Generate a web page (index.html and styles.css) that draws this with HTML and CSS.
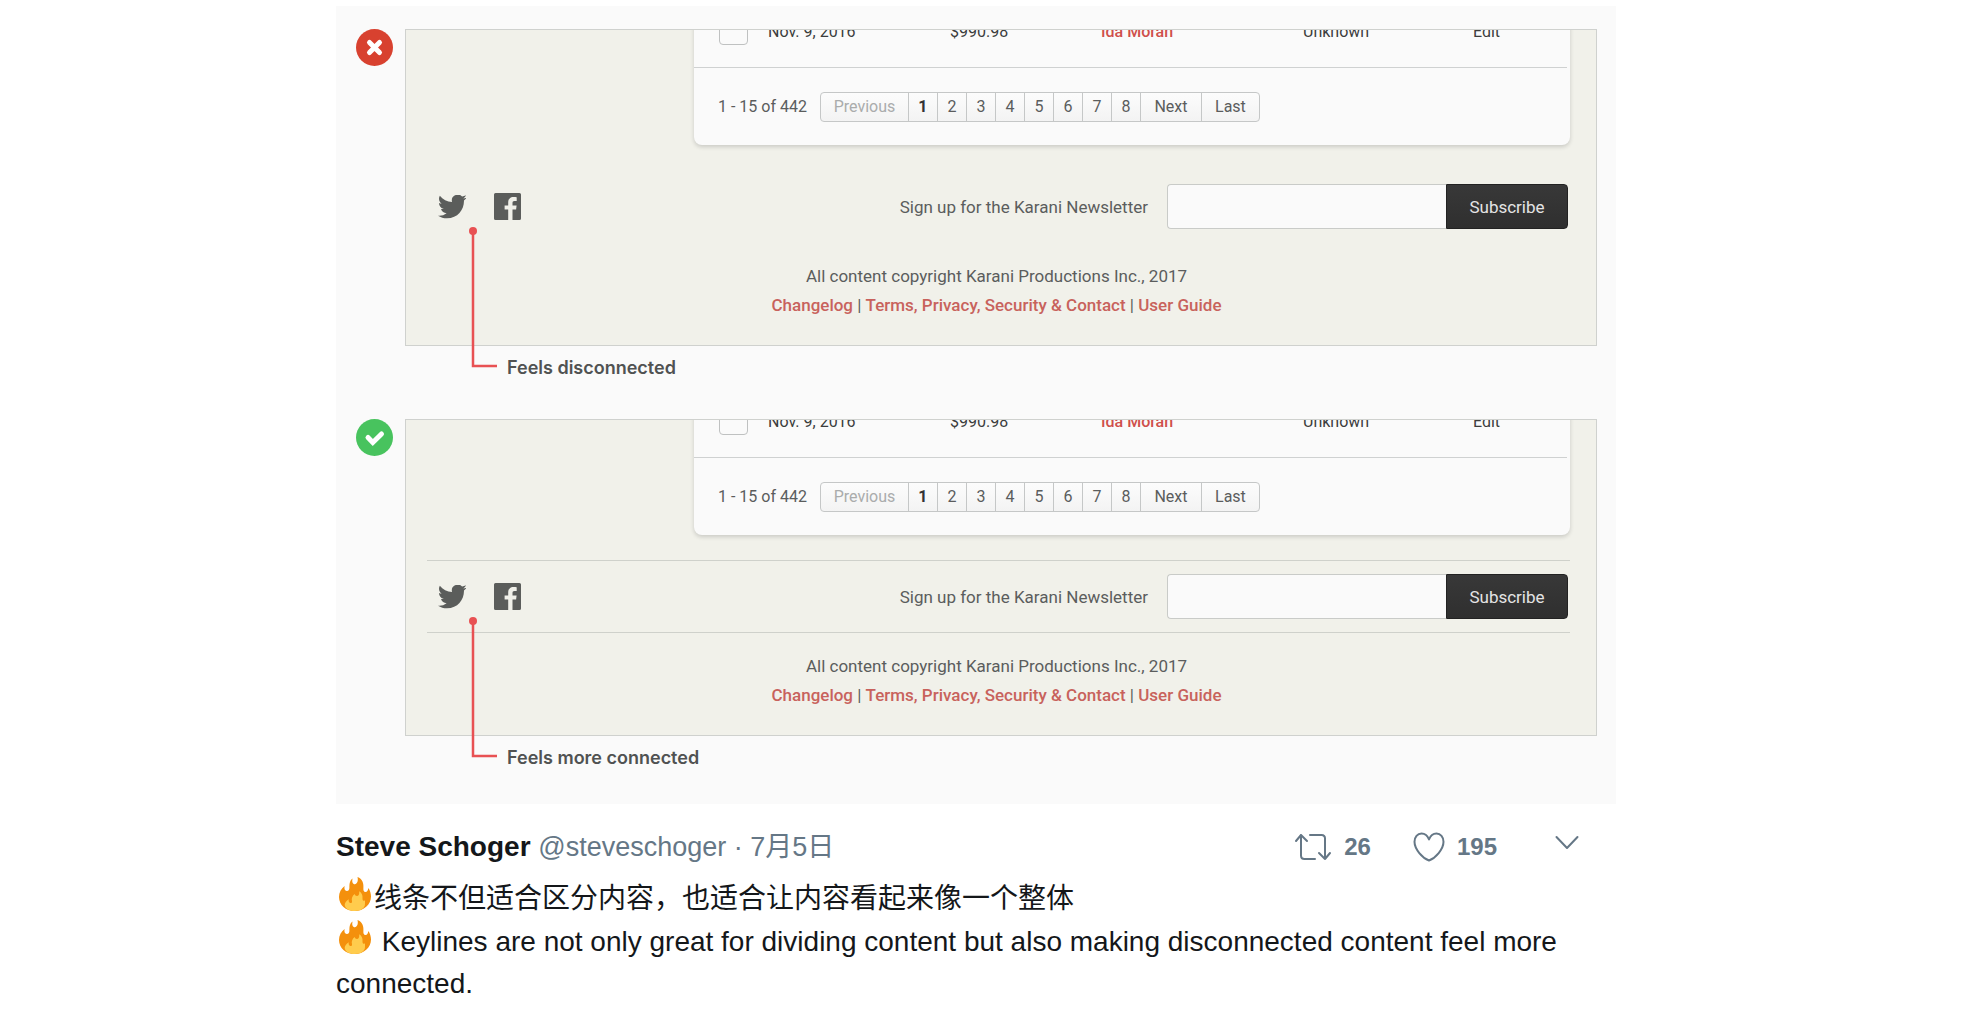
FILE: index.html
```html
<!DOCTYPE html>
<html lang="zh-CN">
<head>
<meta charset="utf-8">
<meta name="viewport" content="width=device-width, initial-scale=1">
<title>Steve Schoger: Keylines</title>
<link rel="stylesheet" href="styles.css">
</head>
<body>
<svg class="sprite" aria-hidden="true">
  <symbol id="twitter" viewBox="1 1 26 22">
    <path d="M27.6 3.1c-1 .4-2 .7-3.100.9 1.100-.7 2-1.800 2.400-3-1.100.6-2.200 1.100-3.500 1.300A5.500 5.500 0 0 0 14 7.300C9.500 7.100 5.400 4.900 2.700 1.500c-1.500 2.500-.7 5.800 1.700 7.400-.9 0-1.700-.3-2.500-.7 0 2.700 1.900 5 4.400 5.500-.8.200-1.600.3-2.500.1.700 2.200 2.700 3.800 5.200 3.900A11.200 11.200 0 0 1 .8 20c2.500 1.600 5.400 2.500 8.500 2.500 10.300 0 16.100-8.700 15.800-16.500 1-.8 1.900-1.800 2.500-2.900z"/>
  </symbol>
  <symbol id="facebook" viewBox="0 0 27 27">
    <path d="M1.500 0h24A1.500 1.500 0 0 1 27 1.500v24a1.500 1.500 0 0 1-1.500 1.500h-7V16.600h3.600l.5-4.100h-4.100V9.900c0-1.200.3-2 2-2h2.200V4.200c-.4 0-1.700-.2-3.200-.2-3.100 0-5.300 1.900-5.300 5.500v3h-3.600v4.100h3.600V27H1.500A1.500 1.500 0 0 1 0 25.500v-24A1.500 1.500 0 0 1 1.500 0z"/>
  </symbol>
  <symbol id="callout" viewBox="0 0 28 142">
    <circle cx="4" cy="4" r="4" fill="#e85153"/>
    <path d="M4 4v135h24" fill="none" stroke="#e85153" stroke-width="2.500"/>
  </symbol>
  <symbol id="fire" viewBox="0 0 32 34">
    <path fill="#f4900c" d="M32 19.500c0-3.300-1-6.400-2.700-8.600-.3 2.700-1.300 4.100-2.700 4.100-2 0-2.400-1.800-2.200-4.500.3-4.300-1.100-8.600-5.900-10.400 1 3.800-.4 7-2.600 7.100-2.300 0-3.200-2.700-2.300-5.800C9.800 4.200 10.600 8.600 10.400 11c-.1 2-1.200 3.100-2.700 2.900-1.900-.3-2.700-2.100-2.100-4.900C2.100 11.600 0 15.600 0 20c0 7.900 6.700 14 15.700 14S32 27.700 32 19.500z"/>
    <path fill="#ffcc4d" d="M26 23.500c-1.300.5-2.700-.1-2.500-2.100.3-3.200-.7-5.600-3.400-7.100.5 2.500-.3 4.400-1.800 4.600-1.500.2-2.300-.9-2.600-2-2.600 2-3.400 4.600-2.700 7.400.2 1.300-.5 2-1.700 1.700-1.300-.3-2-1.600-1.500-3.700-2.500 1.500-4.200 4-4.100 5.700C6.100 31.800 10.200 34 15.800 34c5.900 0 10.200-2.600 10.200-7.200 0-1.100 0-2.200 0-3.300z"/>
  </symbol>
</svg>
<article class="tweet">
  <div class="media">
    <section class="example">
      <svg class="badge" viewBox="0 0 37 37" role="img" aria-label="Wrong"><circle cx="18.500" cy="18.500" r="18.500" fill="#d8412f"/><path d="M13.500 13.500l10 10m0-10l-10 10" stroke="#fff" stroke-width="5" stroke-linecap="round"/></svg>
      <div class="panel">
        <div class="card">
          <table class="rows">
            <colgroup><col class="col-check"><col class="col-date"><col class="col-amount"><col class="col-name"><col class="col-status"><col></colgroup>
            <tr><td><input class="check" type="checkbox" aria-label="Select row"></td><td>Nov. 9, 2016</td><td>$990.98</td><td><a class="person" href="#">Ida Moran</a></td><td>Unknown</td><td><a class="edit" href="#">Edit</a></td></tr>
          </table>
          <div class="paging">
            <span>1 - 15 of 442</span>
            <nav class="pager" aria-label="Pages"><button class="page prev" type="button" disabled>Previous</button><button class="page current" type="button">1</button><button class="page" type="button">2</button><button class="page" type="button">3</button><button class="page" type="button">4</button><button class="page" type="button">5</button><button class="page" type="button">6</button><button class="page" type="button">7</button><button class="page" type="button">8</button><button class="page next" type="button">Next</button><button class="page last" type="button">Last</button></nav>
          </div>
        </div>
        <div class="bar">
          <div class="social"><a href="#" aria-label="Twitter"><svg class="twitter"><use href="#twitter"/></svg></a><a href="#" aria-label="Facebook"><svg class="facebook"><use href="#facebook"/></svg></a></div>
          <form class="signup"><label for="mail-1">Sign up for the Karani Newsletter</label><div class="field"><input class="mail" id="mail-1" type="email"><button class="subscribe" type="button">Subscribe</button></div></form>
        </div>
        <footer class="legal"><p>All content copyright Karani Productions Inc., 2017</p><p><a href="#">Changelog</a> | <a href="#">Terms, Privacy, Security &amp; Contact</a> | <a href="#">User Guide</a></p></footer>
      </div>
      <p class="caption"><svg class="callout" aria-hidden="true"><use href="#callout"/></svg>Feels disconnected</p>
    </section>
    <section class="example">
      <svg class="badge" viewBox="0 0 37 37" role="img" aria-label="Right"><circle cx="18.500" cy="18.500" r="18.500" fill="#48c35e"/><path d="M12 18.500l4.800 5 8.700-8.500" fill="none" stroke="#fff" stroke-width="5" stroke-linecap="round"/></svg>
      <div class="panel">
        <div class="card">
          <table class="rows">
            <colgroup><col class="col-check"><col class="col-date"><col class="col-amount"><col class="col-name"><col class="col-status"><col></colgroup>
            <tr><td><input class="check" type="checkbox" aria-label="Select row"></td><td>Nov. 9, 2016</td><td>$990.98</td><td><a class="person" href="#">Ida Moran</a></td><td>Unknown</td><td><a class="edit" href="#">Edit</a></td></tr>
          </table>
          <div class="paging">
            <span>1 - 15 of 442</span>
            <nav class="pager" aria-label="Pages"><button class="page prev" type="button" disabled>Previous</button><button class="page current" type="button">1</button><button class="page" type="button">2</button><button class="page" type="button">3</button><button class="page" type="button">4</button><button class="page" type="button">5</button><button class="page" type="button">6</button><button class="page" type="button">7</button><button class="page" type="button">8</button><button class="page next" type="button">Next</button><button class="page last" type="button">Last</button></nav>
          </div>
        </div>
        <div class="bar keylines">
          <div class="social"><a href="#" aria-label="Twitter"><svg class="twitter"><use href="#twitter"/></svg></a><a href="#" aria-label="Facebook"><svg class="facebook"><use href="#facebook"/></svg></a></div>
          <form class="signup"><label for="mail-2">Sign up for the Karani Newsletter</label><div class="field"><input class="mail" id="mail-2" type="email"><button class="subscribe" type="button">Subscribe</button></div></form>
        </div>
        <footer class="legal"><p>All content copyright Karani Productions Inc., 2017</p><p><a href="#">Changelog</a> | <a href="#">Terms, Privacy, Security &amp; Contact</a> | <a href="#">User Guide</a></p></footer>
      </div>
      <p class="caption"><svg class="callout" aria-hidden="true"><use href="#callout"/></svg>Feels more connected</p>
    </section>
  </div>
  <header class="meta">
    <div class="author"><strong>Steve Schoger</strong> <span class="handle">@steveschoger · 7月5日</span></div>
    <div class="actions">
      <button class="action" type="button" aria-label="Retweet, 26"><svg width="38" height="28" viewBox="0 0 38 28"><path d="M2 8l5-6 6 6M7 2v20.500q0 3.500 3.500 3.500H21M16 2h11.500q3.500 0 3.500 3.500V26M25 20l6 6 5-6"/></svg><span>26</span></button>
      <button class="action" type="button" aria-label="Like, 195"><svg width="32" height="30" viewBox="0 0 32 30"><path d="M16 7.500C14.500 3.500 11.500 1.500 8.500 1.500 4.500 1.500 1.500 5 1.500 9.800c0 7.500 8 16.200 14.500 18.700 6.500-2.500 14.500-11.200 14.500-18.700 0-4.800-3-8.300-7-8.300-3 0-6 2-7.500 6z"/></svg><span>195</span></button>
      <button class="action more" type="button" aria-label="More"><svg width="24" height="16" viewBox="0 0 24 16"><path d="M1.500 2L12 13 22.500 2"/></svg></button>
    </div>
  </header>
  <div class="text">
    <p><svg class="fire" role="img" aria-label="Fire"><use href="#fire"/></svg>线条不但适合区分内容，也适合让内容看起来像一个整体</p>
    <p><svg class="fire" role="img" aria-label="Fire"><use href="#fire"/></svg> Keylines are not only great for dividing content but also making disconnected content feel more connected.</p>
  </div>
</article>
</body>
</html>
```
FILE: styles.css
```css
* { box-sizing: border-box; }
body {
  margin: 0;
  padding: 6px 30px 0 0;
  background: #fff;
  font-family: "Liberation Sans", "Noto Sans CJK SC", sans-serif;
}
p { margin: 0; }
a { color: inherit; text-decoration: none; }
button, input { font: inherit; color: inherit; margin: 0; }
svg { display: block; flex: none; }
.sprite { position: absolute; width: 0; height: 0; }

.tweet { max-width: 1280px; margin: 0 auto; }

/* Attached illustration */
.media {
  display: grid;
  gap: 37px;
  padding: 23px 19px 32px 20px;
  background: #fafafa;
  font: 16px/20px Roboto, sans-serif;
  color: #5b5d5d;
}
.example { display: grid; grid-template-columns: 37px 1fr; column-gap: 12px; }
.badge { width: 37px; height: 37px; }
.panel {
  overflow: hidden;
  padding: 0 26px 25px 21px;
  border: 1px solid #cfd1ce;
  background: #f1f1ea;
}
.card {
  margin: -33px 0 25px 267px;
  border-radius: 8px;
  background: #fafafa;
  box-shadow: 0 2px 4px rgba(0, 0, 0, .16);
}
.rows { width: 100%; padding-right: 3px; border-spacing: 0; table-layout: fixed; color: #3c3d3d; }
.rows td { height: 71px; padding: 0; border-bottom: 1px solid #cfd1d1; }
.col-check { width: 74px; }
.col-date { width: 182px; }
.col-amount { width: 151px; }
.col-name { width: 202px; }
.col-status { width: 170px; }
.check {
  appearance: none;
  display: block;
  width: 29px;
  height: 26px;
  margin-left: 25px;
  border: 1px solid #bfc1c1;
  border-radius: 4px;
}
.person { color: #cf4f4b; font-weight: 500; }
.paging { display: flex; align-items: center; gap: 13px; height: 77px; padding-left: 24px; }
.pager { display: flex; border: 1px solid #c5c7c7; border-radius: 4px; background: linear-gradient(#fcfcfc, #f3f3f3); }
.page { width: 29px; height: 28px; padding: 0; border: 0; border-left: 1px solid #c5c7c7; background: none; }
.prev { width: 87px; border-left: 0; color: #aaacac; }
.current { color: #333; font-weight: 700; }
.next { width: 61px; }
.last { width: 58px; }

.bar {
  display: flex;
  align-items: center;
  justify-content: space-between;
  height: 73px;
  padding: 0 2px 0 11px;
  border: solid transparent;
  border-width: 1px 0;
}
.keylines { border-color: #cfd1cb; }
.social { display: flex; align-items: center; gap: 28px; fill: #5b5d5b; }
.twitter { width: 28px; height: 24px; }
.facebook { width: 27px; height: 27px; }
.signup { display: flex; align-items: center; gap: 19px; font-size: 17px; }
.field { display: flex; }
.mail {
  width: 279px;
  height: 45px;
  padding: 0 12px;
  border: 1px solid #c9cbc8;
  border-right: 0;
  border-radius: 4px 0 0 4px;
  background: #fafafa;
}
.subscribe {
  width: 122px;
  height: 45px;
  border: 1px solid #222;
  border-radius: 0 4px 4px 0;
  background: linear-gradient(#383838, #2f2f2f);
  color: #e4e4e4;
}
.legal { padding: 19px 4px 0 0; text-align: center; font-size: 17px; line-height: 29px; }
.legal a { color: #c8625c; font-weight: 500; }

.caption {
  grid-column: 2;
  position: relative;
  padding: 7px 0 0 102px;
  font: 600 18px/29px Inter, sans-serif;
  color: #505252;
}
.callout { position: absolute; left: 64px; bottom: 13px; width: 28px; height: 142px; }

/* Tweet */
.meta { display: flex; justify-content: space-between; padding-top: 22px; color: #657786; }
.author { font-size: 28px; line-height: 42px; }
.author strong { color: #14171a; }
.handle { font-size: 27px; }
.actions { display: flex; align-items: center; gap: 42px; padding-right: 37px; }
.action {
  display: flex;
  align-items: center;
  gap: 12px;
  padding: 0;
  border: 0;
  background: none;
  font-size: 24px;
  font-weight: 700;
}
.action path { fill: none; stroke: #657786; stroke-width: 2; stroke-linecap: round; stroke-linejoin: round; }
.more { margin-left: 16px; padding-bottom: 8px; }
.text { padding-top: 9px; font-size: 28px; line-height: 42px; color: #14171a; }
.fire { display: inline-block; width: 32px; height: 34px; margin: 0 3px; vertical-align: -3px; }
```
